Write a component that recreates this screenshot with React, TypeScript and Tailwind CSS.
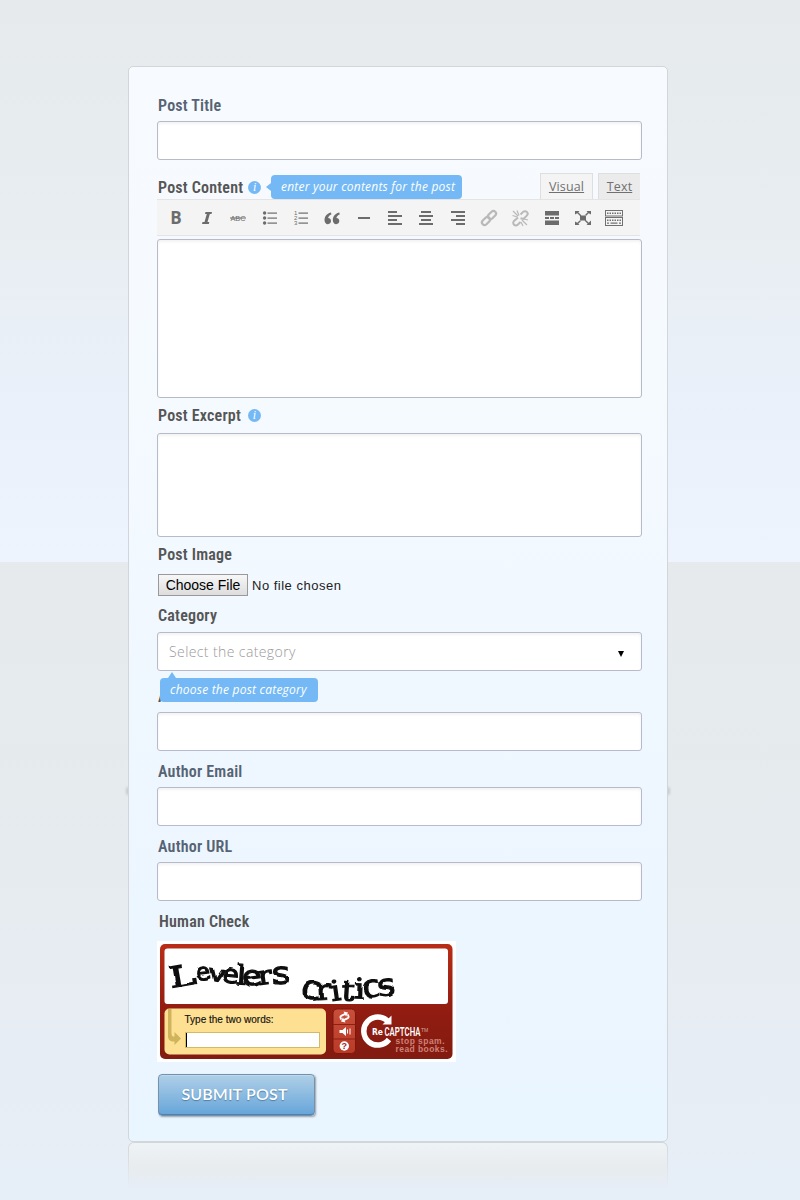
import React from "react";

function Label({ children, tone = "gray", className = "" }: { children: React.ReactNode; tone?: "gray" | "blue"; className?: string }) {
  return (
    <div className={`flex h-5 items-center whitespace-nowrap pl-px pt-0.5 font-['Roboto_Condensed','Roboto',sans-serif] text-[16px] font-semibold leading-5 tracking-[0.2px] [font-stretch:75%] ${tone === "blue" ? "text-[#566373]" : "text-[#555555]"} ${className}`}>
      {children}
    </div>
  );
}

function Field({ className = "h-[39px]", children }: { className?: string; children?: React.ReactNode }) {
  return (
    <div className={`w-[485px] rounded-[3px] border border-[#b7bac9] bg-white shadow-[inset_0_2px_3px_rgba(0,0,0,0.05)] ${className}`}>{children}</div>
  );
}

function Info({ className = "ml-[5px]" }: { className?: string }) {
  return (
    <span className={`mb-0.5 flex size-[13px] items-center justify-center rounded-full bg-[#74b9f5] font-['Liberation_Serif',serif] text-[12px] font-normal italic leading-none tracking-normal text-white ${className}`}>i</span>
  );
}

const lines = (rows: [number, number, number][]) => rows.map(([x, y, w]) => <rect key={y} x={x} y={y} width={w} height="2" />);

const icons: React.ReactNode[] = [
  <text x="10" y="16" textAnchor="middle" className="font-['Open_Sans',sans-serif] text-[17px] font-bold">B</text>,
  <path d="M8.500 4H15l-.5 2h-1.700l-2.300 8h1.800l-.5 2H5l.5-2h2l2.300-8H8z" />,
  <g><text x="10" y="13" textAnchor="middle" textLength="15" lengthAdjust="spacingAndGlyphs" className="font-['Liberation_Sans',sans-serif] text-[8px]">ABC</text><rect x="2" y="9.500" width="16" height="1" /></g>,
  <g>{[5, 10, 15].map((y) => <g key={y}><circle cx="4.600" cy={y} r="1.700" /><rect x="7.500" y={y - 0.5} width="9.500" height="1.200" /></g>)}</g>,
  <g>{[5, 10, 15].map((y, i) => <g key={y}><text x="3" y={y + 2} className="font-['Liberation_Sans',sans-serif] text-[6px]">{i + 1}</text><rect x="7.500" y={y - 0.5} width="9.500" height="1.200" /></g>)}</g>,
  <path d="M9 4.500C6.200 5.200 2.500 7.400 2.500 12c0 2.600 1.500 4.200 3.400 4.200 1.800 0 3.100-1.300 3.100-3.100 0-1.900-1.300-3-2.900-3.100.2-1.600 1.400-2.800 3.300-3.500zm8.300 0c-2.800.7-6.500 2.900-6.500 7.500 0 2.600 1.500 4.200 3.400 4.200 1.800 0 3.100-1.300 3.100-3.100 0-1.900-1.300-3-2.900-3.100.2-1.600 1.400-2.800 3.300-3.500z" />,
  <rect x="4" y="9" width="12" height="2" />,
  lines([[3, 3, 9], [3, 7, 14], [3, 11, 9], [3, 15, 14]]),
  lines([[5, 3, 10], [3, 7, 14], [5, 11, 10], [3, 15, 14]]),
  lines([[3, 3, 14], [8, 7, 9], [3, 11, 14], [8, 15, 9]]),
  <g fill="none" stroke="#b9b9b9" strokeWidth="2.200"><rect x="-4.600" y="-2.600" width="9.200" height="5.200" rx="2.600" transform="translate(7 13) rotate(-45)" /><rect x="-4.600" y="-2.600" width="9.200" height="5.200" rx="2.600" transform="translate(13 7) rotate(-45)" /></g>,
  <g fill="none" stroke="#b9b9b9" strokeWidth="2"><path d="M8 9.500l-4 3.500a2.600 2.600 0 003.700 3.700L10.500 14M10.500 6.500l2.600-2.600a2.600 2.600 0 013.700 3.700l-3.300 3.300-3-.7" /><path strokeWidth="1.200" d="M3 3l5 5M7 2.500l2 5M2.500 7.500l5 1.500M12 12l5 5M14 11l4 1M11 14l2 4" /></g>,
  <path d="M3 3h14v4.500H3zM3 9h4v2H3zM8 9h4v2H8zM13 9h4v2h-4zM3 12.500h14V17H3z" />,
  <g><path d="M7 7.500h6v5H7zM2 3h4.500L5.300 4.200l3 3-1 1-3-3L2 6.500zM18 3h-4.500l1.200 1.200-3 3 1 1 3-3L18 6.500zM2 17h4.500l-1.200-1.200 3-3-1-1-3 3L2 13.500zM18 17h-4.500l1.200-1.200-3-3 1-1 3 3 2.300-2.300z" /></g>,
  <g fill="none" stroke="#707070"><rect x="1.500" y="2.500" width="17" height="5.500" /><rect x="1.500" y="9.500" width="17" height="8" /><path strokeWidth="1.500" strokeDasharray="1.500 1" d="M3 5.300h14M3 12.300h14" /><path strokeWidth="1.300" d="M3 15.200h2M6.500 15.200h7M15 15.200h2" /></g>,
];

function Toolbar() {
  return (
    <div className="grid h-[37px] w-[483px] grid-cols-15 border-y border-[#e4e4e4] bg-[#f4f4f4] pl-[3px] pr-[10px]">
      {icons.map((icon, i) => (
        <span key={i} className="flex items-center justify-center">
          <svg viewBox="0 0 20 20" className="size-5" fill="#6c6c6c">{icon}</svg>
        </span>
      ))}
    </div>
  );
}

const letters: [string, number, number, number, number, number][] = [
  ["L", 11, 44, -10, 35, 1.15], ["e", 36, 36, -6, 27, 0.95], ["v", 48, 36, 10, 27, 0.95], ["e", 61, 38, 6, 31, 0.9], ["l", 76, 40, 4, 34, 0.9], ["e", 83, 43, -7, 34, 0.95], ["r", 99, 41, -8, 31, 0.95], ["s", 112, 40, -2, 37, 0.95],
  ["c", 140, 54, 8, 40, 0.9], ["r", 157, 56, -3, 36, 0.85], ["i", 172, 57, -8, 34, 0.9], ["t", 181, 56, 4, 34, 0.95], ["i", 194, 54, 2, 34, 0.9], ["c", 203, 54, -8, 37, 0.9], ["s", 219, 52, -5, 36, 0.9],
];

function Captcha() {
  return (
    <div className="h-[121px] w-[299px] bg-white p-[3px]">
      <svg viewBox="0 0 293 116" className="block h-[116px] w-[293px]">
        <defs>
          <linearGradient id="red" x2="0" y2="1"><stop stopColor="#b82d17" /><stop offset=".6" stopColor="#911c11" /><stop offset="1" stopColor="#821b10" /></linearGradient>
          <linearGradient id="tool" x2="0" y2="1"><stop stopColor="#c94f3b" /><stop offset="1" stopColor="#b93a27" /></linearGradient>
          <filter id="rough" x="-5%" y="-10%" width="110%" height="120%"><feTurbulence type="fractalNoise" baseFrequency="0.07" numOctaves="1" seed="4" /><feDisplacementMap in="SourceGraphic" scale="4" xChannelSelector="R" yChannelSelector="G" /></filter>
        </defs>
        <rect width="292.500" height="115" rx="5" fill="url(#red)" />
        <rect x="4.500" y="4.500" width="283.500" height="55.500" rx="3" fill="#fff" />
        <g filter="url(#rough)" fill="#0a0a0a" className="font-['DejaVu_Sans',sans-serif]" stroke="#0a0a0a" strokeWidth="1.500">
          {letters.map(([ch, x, y, r, size, sx], i) => (
            <text key={i} transform={`translate(${x} ${y}) rotate(${r}) scale(${sx} .82)`} fontSize={size} className={i === 0 || "rlit".includes(ch) ? "font-['DejaVu_Serif',serif]" : ""}>{ch}</text>
          ))}
        </g>
        <rect x="4.500" y="64.500" width="161.500" height="46" rx="5" fill="#fee092" />
        <path d="M8 65h3.500v24c0 3 1 3.500 3 3.500V88l6.500 6.500-6.500 6.500v-3.500c-5 0-6.500-2-6.500-6z" fill="#cfb35d" />
        <text x="24.500" y="78.500" fill="#111" className="font-['Liberation_Sans',sans-serif] text-[10px]" textLength="89" lengthAdjust="spacingAndGlyphs" stroke="#111" strokeWidth=".15">Type the two words:</text>
        <rect x="25.500" y="88.500" width="134" height="15" fill="#fff" stroke="#d3ba69" />
        <rect x="26" y="89" width="1" height="14" />
        <rect x="173" y="65" width="22.500" height="44.500" rx="4" fill="url(#tool)" stroke="#7d170c" />
        <path d="M173 80.500h22.500M173 95h22.500" stroke="#8c2012" />
        <g transform="rotate(-25 184.500 73)">
          <g fill="none" stroke="#fff" strokeWidth="1.800"><path d="M180.500 74v-1.500q0-2 2-2h4M188.500 72v1.500q0 2-2 2h-4" /></g>
          <path d="M186 67.500l3.500 3-3.500 3zM183 72.500l-3.500 3 3.500 3z" fill="#fff" />
        </g>
        <path d="M179.500 86h3l3.500-3v9l-3.500-3h-3z" fill="#fff" />
        <path d="M187.500 85.500v4M190 84.500v6" stroke="#fff" />
        <circle cx="184.300" cy="102" r="4.700" fill="#fff" />
        <text x="184.300" y="105.200" textAnchor="middle" fill="#a52819" className="font-['Liberation_Sans',sans-serif] text-[9px] font-bold">?</text>
        <path d="M228 77.500A14 14 0 10229 95.500" fill="none" stroke="#fff" strokeWidth="5.500" />
        <path d="M231.500 71.500v9h-9z" fill="#fff" />
        <text x="212" y="90.500" fill="#fff" className="font-['DejaVu_Sans',sans-serif] text-[8.500px] font-bold" textLength="11" lengthAdjust="spacingAndGlyphs">Re</text>
        <text x="224.500" y="91.500" fill="#fff" className="font-['Roboto',sans-serif] text-[12.500px] font-semibold" textLength="36" lengthAdjust="spacingAndGlyphs">CAPTCHA</text>
        <text x="261" y="87.500" fill="#d9a49c" className="font-['Liberation_Sans',sans-serif] text-[5px]">TM</text>
        <g fill="#cf8177" className="font-['Liberation_Sans',sans-serif] text-[8.500px] font-bold"><text x="235.500" y="100" textLength="49">stop spam.</text><text x="235.500" y="107.700" textLength="52">read books.</text></g>
      </svg>
    </div>
  );
}

export default function App() {
  return (
    <main className="relative h-[1200px] w-[800px] overflow-hidden bg-[linear-gradient(#e6eaed_0px,#e7edf0_220px,#ebf1fb_420px,#eef4fd_562px,#e6eaec_562px,#e5ebee_850px,#e7edf4_1050px,#e6eef7_1200px)] pl-32 pt-[66px]">
      <i className="absolute left-[126px] top-[787px] h-2 w-1 rounded-full bg-[#c8cccf] blur-[1px]" />
      <i className="absolute left-[666px] top-[787px] h-2 w-1 rounded-full bg-[#c8cccf] blur-[1px]" />
      <form className="relative h-[1076px] w-[540px] rounded-[5px] border border-[#d3d5d8] bg-[linear-gradient(#f7faff,#f5faff_30%,#eff7ff_60%,#e9f5ff)] pl-7 pt-7">
        <Label tone="blue">Post Title</Label>
        <Field className="mt-1.5 h-[39px]" />
        <div className="flex h-[39px] w-[483px] items-end">
          <Label className="mb-0.5 w-[104px] shrink-0">Post Content<Info /></Label>
          <div className="relative ml-[10px] flex h-6 w-[191px] shrink-0 items-center rounded-[4px] bg-[#74b9f5] pl-[10px] font-['Open_Sans',sans-serif] text-[12px] italic tracking-[0.22px] text-white">
            <span className="absolute -left-[5px] top-[8px] border-y-4 border-r-[5px] border-y-transparent border-r-[#74b9f5]" />
            <span className="whitespace-nowrap">enter your contents for the post</span>
          </div>
          <div className="ml-auto flex gap-[5px] font-['Open_Sans',sans-serif] text-[12.500px] tracking-[0.15px] text-[#707070] underline">
            <span className="flex h-[26px] w-[53px] items-center justify-center border border-b-0 border-[#dedede] bg-[#f4f4f4] pt-px">Visual</span>
            <span className="flex h-[26px] w-[42px] items-center justify-center border border-b-0 border-r-0 border-[#dedede] bg-[#ebebeb] pt-px">Text</span>
          </div>
        </div>
        <Toolbar />
        <Field className="mt-[3px] h-[159px]" />
        <Label className="mt-[7px]">Post Excerpt<Info className="ml-[7px]" /></Label>
        <Field className="mt-2 h-[104px]" />
        <Label className="mt-[7px]">Post Image</Label>
        <div className="ml-px mt-[10px] flex h-[22px] items-center gap-1 font-['Liberation_Sans',sans-serif] text-[13px] text-[#222]">
          <span className="flex h-[22px] w-[90px] items-center justify-center whitespace-nowrap border border-[#999] bg-gradient-to-b from-[#f7f7f7] to-[#dddddd] text-[14px] text-black">Choose File</span>
          <span className="pt-px tracking-[0.5px]">No file chosen</span>
        </div>
        <Label className="mt-[9px]">Category</Label>
        <Field className="mt-[7px] flex h-[39px] items-center justify-between pl-[11px] pr-[17px]">
          <span className="font-['Open_Sans',sans-serif] text-[14px] font-light tracking-[0.4px] text-[#999999]">Select the category</span>
          <span className="mt-1 border-x-[3.500px] border-t-[6px] border-x-transparent border-t-black" />
        </Field>
        <div className="relative mt-[15px]">
          <Label>Author Name</Label>
          <div className="absolute -top-2 left-[3px] flex h-6 w-[158px] items-center rounded-[4px] bg-[#74b9f5] pl-[10px] font-['Open_Sans',sans-serif] text-[12px] italic tracking-[0.22px] text-white">
            <span className="absolute -top-[6px] left-[8px] border-x-4 border-b-[6px] border-x-transparent border-b-[#74b9f5]" />
            <span className="whitespace-nowrap">choose the post category</span>
          </div>
        </div>
        <Field className="mt-1.5 h-[39px]" />
        <Label tone="blue" className="mt-[10px]">Author Email</Label>
        <Field className="mt-1.5 h-[39px]" />
        <Label tone="blue" className="mt-[10px]">Author URL</Label>
        <Field className="mt-1.5 h-[39px]" />
        <Label className="ml-px mt-[10px]">Human Check</Label>
        <div className="mt-[10px]"><Captcha /></div>
        <button type="button" className="ml-px mt-3 flex h-[42px] w-[157px] items-center justify-center rounded-[4px] border border-[#7792a8] bg-gradient-to-b from-[#afcfe7] to-[#65a5d9] pb-0.5 pr-1 font-['Lato',sans-serif] text-[16px] font-semibold tracking-[0.15px] text-white shadow-[inset_0_-1px_0_#4c82b2,inset_0_1px_0_#bad9ee,1px_1px_2px_rgba(0,0,0,0.35)] [text-shadow:0_1px_1px_#527da0]">SUBMIT POST</button>
      </form>
      <div className="h-[46px] w-[540px] rounded-t-[6px] bg-gradient-to-b from-[#d3d6d9] to-transparent p-px pb-0">
        <div className="h-full rounded-t-[5px] bg-gradient-to-b from-[#eef3f6] via-[#e8ecee] to-[#e6edf6]" />
      </div>
    </main>
  );
}
